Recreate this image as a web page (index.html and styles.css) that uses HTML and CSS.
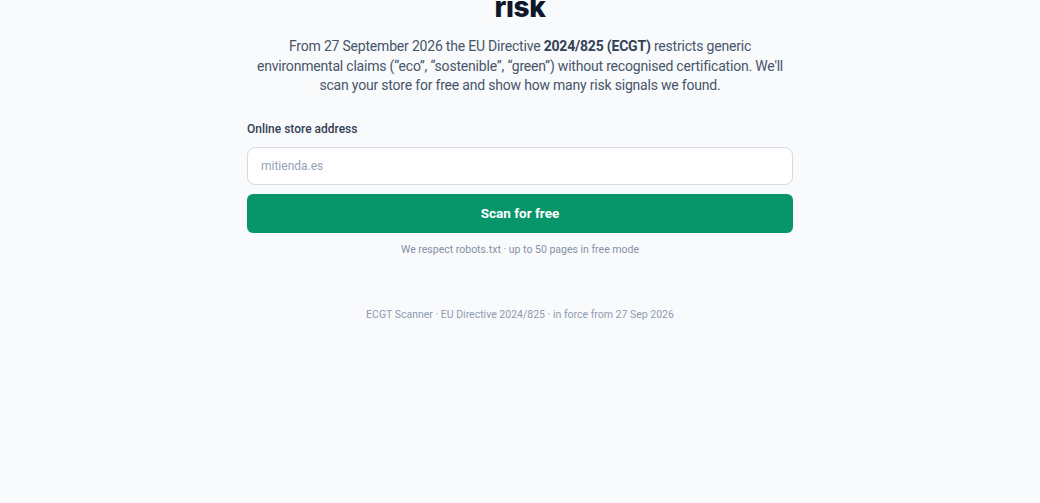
FILE: index.html
```html
<!DOCTYPE html>
<html lang="en">

<head>
    <meta charset="UTF-8">
    <meta name="viewport" content="width=device-width, initial-scale=1.0">
    <title>ECGT Scanner</title>
    <link rel="stylesheet" href="styles.css">
</head>

<body>
    <main class="hero">
        <h1 class="hero-title">risk</h1>
        <p class="hero-lead">
            From 27 September 2026 the EU Directive <strong>2024/825 (ECGT)</strong> restricts generic
            environmental claims (“eco”, “sostenible”, “green”) without recognised certification. We'll
            scan your store for free and show how many risk signals we found.
        </p>

        <form class="scan-form" onsubmit="return false;">
            <label class="scan-label" for="storeUrl">Online store address</label>
            <input class="scan-input" id="storeUrl" type="text" placeholder="mitienda.es">
            <button class="scan-button" type="submit">Scan for free</button>
            <p class="scan-note">We respect robots.txt · up to 50 pages in free mode</p>
        </form>
    </main>

    <footer class="site-footer">
        ECGT Scanner · EU Directive 2024/825 · in force from 27 Sep 2026
    </footer>
</body>

</html>
```

FILE: styles.css
```css
body {
    margin: 0;
    background-color: #f8fafc;
    font-family: Roboto, Inter, 'Liberation Sans', sans-serif;
    color: #0f172a;
    min-height: 100vh;
}

.hero {
    width: 546px;
    margin: 0 auto;
    display: flex;
    flex-direction: column;
    align-items: center;
}

.hero-title {
    margin: -11px 0 0;
    font-family: Inter, sans-serif;
    font-size: 28px;
    line-height: 36px;
    font-weight: 800;
    letter-spacing: -0.3px;
    color: #0f172a;
}

.hero-lead {
    margin: 12px 0 0;
    width: 540px;
    text-align: center;
    font-size: 14px;
    letter-spacing: -0.2px;
    line-height: 19.5px;
    color: #475569;
}

.hero-lead strong {
    color: #334155;
    font-weight: 700;
}

/* Scan form */
.scan-form {
    width: 100%;
    margin-top: 24px;
    display: flex;
    flex-direction: column;
}

.scan-label {
    font-size: 12px;
    line-height: 18px;
    font-weight: 500;
    color: #334155;
    margin-bottom: 9px;
}

.scan-input {
    box-sizing: border-box;
    height: 38px;
    padding: 0 13px;
    border: 1px solid #d4dae3;
    border-radius: 8px;
    background: #fff;
    font-family: inherit;
    font-size: 12px;
    color: #0f172a;
}

.scan-input::placeholder {
    color: #94a3b8;
}

.scan-button {
    margin-top: 9px;
    height: 39px;
    border: none;
    border-radius: 6px;
    background-color: #07956a;
    color: #fff;
    font-family: inherit;
    font-size: 13.5px;
    font-weight: 700;
    cursor: pointer;
}

.scan-button:hover {
    background-color: #047857;
}

.scan-note {
    margin: 10px 0 0;
    text-align: center;
    font-size: 10.5px;
    line-height: 14px;
    color: #8591a5;
}

.site-footer {
    margin-top: 51px;
    text-align: center;
    font-size: 10.5px;
    line-height: 14px;
    color: #8f9bb0;
}
```
